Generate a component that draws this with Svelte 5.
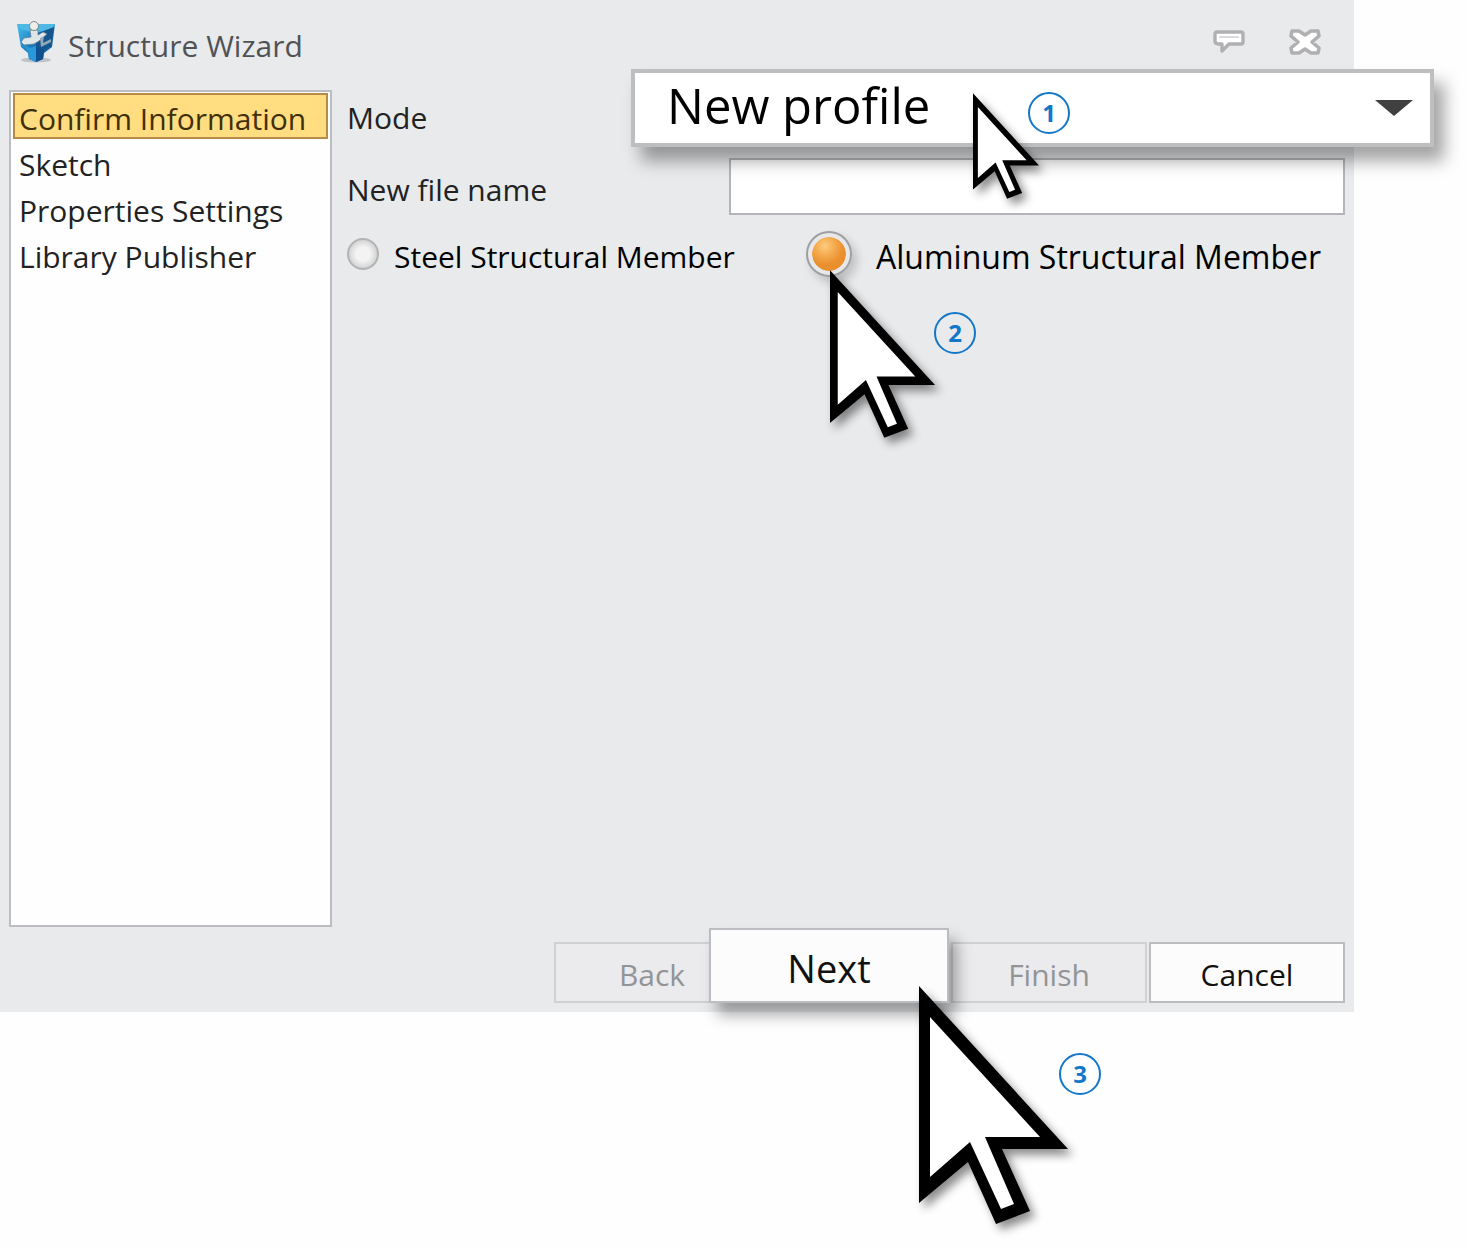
<script lang="ts">
  interface Step {
    id: string
    title: string
  }

  const steps: Step[] = [
    { id: 'confirm', title: 'Confirm Information' },
    { id: 'sketch', title: 'Sketch' },
    { id: 'properties', title: 'Properties Settings' },
    { id: 'publisher', title: 'Library Publisher' }
  ]

  let current = $state('confirm')
  let mode = $state('new')
  let fileName = $state('')
  let material = $state('aluminum')
</script>

{#snippet pointer(size: string)}
  <svg class="pointer {size}" viewBox="0 0 149 238" aria-hidden="true">
    <path d="M0 0V217L49 176L77 238L111 225L83 163H149Z" fill="#000" />
    <path d="M11 31V191L51 156L82 223L95 218L66 151H121Z" fill="#fff" />
  </svg>
{/snippet}

<div class="page">
  <main class="wizard">
    <header>
      <svg class="logo" viewBox="0 0 40 42" aria-hidden="true">
        <defs>
          <linearGradient id="shield" x1="0" y1="0" x2="1" y2="1">
            <stop offset="0" stop-color="#48c0ee" />
            <stop offset="0.45" stop-color="#1a7fc2" />
            <stop offset="1" stop-color="#0c3f7c" />
          </linearGradient>
        </defs>
        <ellipse cx="20" cy="39" rx="15" ry="2.5" fill="#bfc2c5" />
        <path d="M1 3H39L36 26L28 32L27 38L20 41L13 38L12 32L5 26Z" fill="url(#shield)" />
        <path d="M1 3H39L37 7L20 12L4 8Z" fill="#4fb9e6" />
        <path d="M20 13L38 6L35 25L25 30L20 27Z" fill="#15558f" />
        <path d="M7 24L14 27L20 25V41L13 38L12 31Z" fill="#2a97d8" />
        <path d="M20 27L28 29L27 38L20 41Z" fill="#0e5090" />
        <path d="M14 9L22 9L22 14L27 11L31 13L23 20L18 23L8 24L5 21L8 17L15 16Z" fill="#dfe6e9" stroke="#5f7f92" stroke-width="0.8" />
        <path d="M24 17L28 15L27 22L35 18L35 21L25 26Z" fill="#93a9b8" />
        <circle cx="18" cy="5" r="4.5" fill="#eceeea" stroke="#7f8a8c" stroke-width="1" />
      </svg>
      <h1>Structure Wizard</h1>
      <button class="tool" aria-label="Feedback">
        <svg width="32" height="24" viewBox="0 0 32 24">
          <path d="M4 2H28Q30 2 30 4V12Q30 14 28 14H16L9 21V14H6Q2 14 2 11V4Q2 2 4 2Z" fill="#fff" stroke="#b0b0b2" stroke-width="3.4" stroke-linejoin="round" />
          <path d="M6 7H26" stroke="#cbcbcd" stroke-width="1.4" />
        </svg>
      </button>
      <button class="tool" aria-label="Close">
        <svg width="32" height="26" viewBox="0 0 32 26">
          <path d="M3 2H10L16 6L22 2H29L30 7L23 13L30 19L29 24H22L16 20L10 24H3L2 19L9 13L2 7Z" fill="#fff" stroke="#b0b0b2" stroke-width="3.6" stroke-linejoin="round" />
        </svg>
      </button>
    </header>

    <div class="body">
      <nav class="steps">
        {#each steps as step (step.id)}
          <button class:active={current === step.id} onclick={() => (current = step.id)}>{step.title}</button>
        {/each}
      </nav>

      <form class="form" onsubmit={(e) => e.preventDefault()}>
        <div class="row mode-row">
          <label for="mode">Mode</label>
          <div class="combo">
            <select id="mode" bind:value={mode}>
              <option value="new">New profile</option>
              <option value="edit">Edit profile</option>
            </select>
            <svg class="arrow" viewBox="0 0 38 16" aria-hidden="true">
              <path d="M0 0H38L19 16Z" fill="#404041" />
            </svg>
            {@render pointer('small')}
            <span class="badge one">1</span>
          </div>
        </div>

        <div class="row file-row">
          <label for="file-name">New file name</label>
          <input id="file-name" type="text" bind:value={fileName} />
        </div>

        <div class="members">
          <label class="steel">
            <input type="radio" name="material" value="steel" bind:group={material} />
            <span>Steel Structural Member</span>
          </label>
          <label class="aluminum">
            <input type="radio" name="material" value="aluminum" bind:group={material} />
            <span>Aluminum Structural Member</span>
            {@render pointer('medium')}
            <span class="badge two">2</span>
          </label>
        </div>
      </form>
    </div>

    <footer>
      <button disabled>Back</button>
      <div class="next">
        <button>Next</button>
        {@render pointer('large')}
        <span class="badge three">3</span>
      </div>
      <button disabled>Finish</button>
      <button>Cancel</button>
    </footer>
  </main>
</div>

<style>
  :global(body) {
    margin: 0;
    background: #fefefe;
  }
  .page {
    min-height: 100vh;
    padding-right: 115px;
    font-family: "Open Sans", "Noto Sans", sans-serif;
    font-size: 30px;
    line-height: 40px;
    color: #222;
  }
  button, input, select {
    box-sizing: border-box;
    margin: 0;
    font: inherit;
    color: inherit;
  }
  .wizard {
    background: #e8eaec;
  }
  header {
    display: flex;
    align-items: center;
    gap: 44px;
    height: 69px;
    box-sizing: border-box;
    padding: 14px 33px 0 16px;
  }
  .logo {
    width: 40px;
    height: 42px;
    margin-right: -32px;
  }
  h1 {
    flex: 1;
    margin: 8px 0 0;
    font-size: 30px;
    font-weight: 400;
    color: #505256;
  }
  .tool {
    display: flex;
    padding: 0;
    border: none;
    background: none;
  }
  .body {
    display: flex;
    gap: 15px;
    padding: 0 9px;
  }
  .steps {
    flex: none;
    width: 323px;
    min-height: 837px;
    box-sizing: border-box;
    margin-top: 21px;
    padding: 1px 2px;
    border: 2px solid #bcbdc0;
    background: #fefefe;
    display: flex;
    flex-direction: column;
  }
  .steps button {
    height: 46px;
    padding: 4px 4px 0;
    border: 2px solid transparent;
    background: none;
    text-align: left;
    white-space: nowrap;
  }
  .steps button.active {
    border-color: #b58b46;
    background: #ffdd80;
    color: #3f3008;
  }
  .form {
    flex: 1;
    min-width: 0;
  }
  .row {
    display: flex;
  }
  .row label {
    flex: none;
    white-space: nowrap;
  }
  .mode-row label {
    width: 284px;
    padding-top: 29px;
  }
  .combo {
    position: relative;
    z-index: 1;
    flex: 1;
    margin-right: -89px;
  }
  select {
    display: block;
    width: 100%;
    height: 78px;
    padding: 0 80px 6px 32px;
    border: 4px solid #bcbec0;
    border-radius: 0;
    background: #fff;
    box-shadow: 10px 14px 16px rgba(0, 0, 0, 0.36);
    appearance: none;
    font-size: 49px;
    line-height: 64px;
    color: #000;
  }
  .arrow {
    position: absolute;
    right: 21px;
    top: 31px;
    width: 38px;
    height: 16px;
    pointer-events: none;
  }
  .file-row {
    margin-top: 11px;
  }
  .file-row label {
    width: 382px;
    padding-top: 12px;
  }
  .file-row input {
    flex: 1;
    min-width: 0;
    height: 57px;
    padding: 0 12px;
    border: 2px solid #b4b5b8;
    background: #fff;
  }
  .members {
    display: flex;
    align-items: center;
    margin-top: 16px;
    height: 46px;
    color: #000;
  }
  .members label {
    display: flex;
    align-items: center;
    white-space: nowrap;
  }
  .members label > span:not(.badge) {
    padding-top: 6px;
  }
  .steel {
    width: 459px;
    gap: 15px;
  }
  .aluminum {
    position: relative;
    gap: 24px;
    font-size: 32px;
  }
  input[type='radio'] {
    appearance: none;
    flex: none;
    width: 32px;
    height: 32px;
    border: 2px solid #b2b3b3;
    border-radius: 50%;
    background: radial-gradient(circle, #f3f3f3 35%, #dedede 60%, #d4d4d4 70%);
  }
  input[type='radio']:checked {
    width: 46px;
    height: 46px;
    border-color: #9d9fa2;
    background: radial-gradient(circle at 17px 13px, #fdcc80 0, #f4a94c 10px, #e98f2e 19px);
    background-clip: content-box;
    padding: 4px;
    box-shadow: inset 0 0 0 4px #e8e8ea, 5px 6px 10px rgba(0, 0, 0, 0.18);
  }
  footer {
    display: flex;
    align-items: flex-end;
    justify-content: flex-end;
    gap: 2px;
    margin-top: 1px;
    padding: 0 9px 9px;
  }
  footer button {
    width: 196px;
    height: 61px;
    padding: 4px 0 0;
    border: 2px solid #bcbdc0;
    background: #fcfcfd;
    color: #111;
  }
  footer button:disabled {
    border-color: #d0d1d3;
    background: #ebebed;
    color: #929497;
  }
  .next {
    position: relative;
    z-index: 1;
    margin-left: -43px;
  }
  .next button {
    display: block;
    width: 240px;
    height: 75px;
    box-shadow: 8px 12px 14px rgba(0, 0, 0, 0.34);
    font-size: 38px;
  }
  .pointer {
    position: absolute;
    z-index: 2;
    overflow: visible;
    pointer-events: none;
    filter: drop-shadow(5px 6px 5px rgba(0, 0, 0, 0.45));
  }
  .small {
    left: 342px;
    top: 24px;
    width: 66px;
    height: 106px;
  }
  .medium {
    left: 24px;
    top: 39px;
    width: 105px;
    height: 168px;
  }
  .large {
    left: 210px;
    top: 58px;
    width: 149px;
    height: 238px;
  }
  .badge {
    position: absolute;
    width: 42px;
    height: 42px;
    box-sizing: border-box;
    border: 2px solid #1277c8;
    border-radius: 50%;
    font-size: 24px;
    font-weight: 700;
    line-height: 38px;
    text-align: center;
    color: #1277c8;
  }
  .one {
    left: 397px;
    top: 23px;
  }
  .two {
    left: 128px;
    top: 81px;
  }
  .three {
    left: 350px;
    top: 125px;
  }
</style>
